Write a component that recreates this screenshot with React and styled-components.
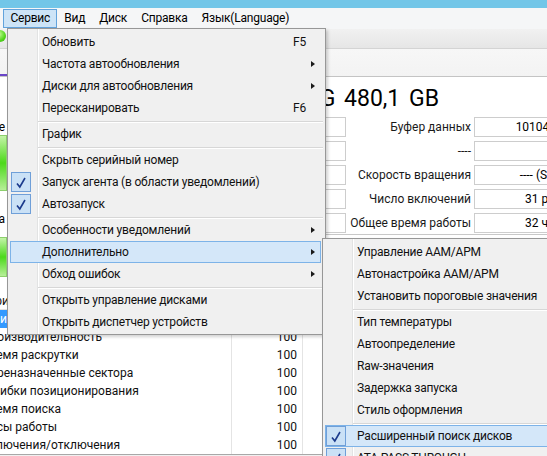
import React from 'react';
import styled, { createGlobalStyle } from 'styled-components';

const GlobalStyle = createGlobalStyle`
  html, body {
    margin: 0;
    padding: 0;
    background: #f0f0f0;
  }
  body {
    font-family: Roboto, "Liberation Sans", sans-serif;
    font-size: 12px;
    color: #000;
  }
`;

const Viewport = styled.div`
  width: 547px;
  height: 456px;
  overflow: hidden;
  background: #f0f0f0;
`;

/* the window is wider than the shot: its left part is cropped away */
const Frame = styled.div`
  position: relative;
  margin-left: -100px;
  width: 647px;
  height: 456px;
  display: flex;
  flex-direction: column;
  overflow: hidden;
`;

const TitleBar = styled.div`
  flex: none;
  height: 8px;
  background: #72c6e8;
`;

const MenuBar = styled.div`
  flex: none;
  height: 21px;
  box-sizing: border-box;
  display: flex;
  align-items: flex-start;
  padding: 1px 0 0 6px;
  background: #f5f6f7;
  letter-spacing: -0.2px;
`;

const MenuTop = styled.div`
  height: 19px;
  box-sizing: border-box;
  padding: 0 6px;
  line-height: 17px;
  white-space: nowrap;
  border: 1px solid ${p => (p.$open ? '#62a3dc' : 'transparent')};
  background: ${p => (p.$open ? '#cde4f7' : 'transparent')};
`;

const DiskBar = styled.div`
  flex: none;
  height: 20px;
  box-sizing: border-box;
  display: flex;
  align-items: flex-start;
  padding: 1px 0 0 94px;
  background: linear-gradient(#f1f1f1, #e6e6e6);
  border-bottom: 1px solid #d4d4d4;
`;

const DiskButton = styled.div`
  display: flex;
  align-items: center;
  gap: 4px;
  height: 12px;
  line-height: 12px;
  white-space: nowrap;
`;

const StatusDot = styled.span`
  width: 12px;
  height: 12px;
  border-radius: 50%;
  background: radial-gradient(circle at 40% 35%, #c8ff9a, #52d61c 60%, #36a80e);
`;

const TabRow = styled.div`
  flex: none;
  height: 28px;
  box-sizing: border-box;
  display: flex;
  align-items: flex-end;
  background: linear-gradient(#f7f7f7, #f3f3f3);
  border-bottom: 1px solid #c4c4c4;
`;

const DiskTab = styled.div`
  width: 107px;
  height: 2px;
  background: #6a46c8;
`;

const Body = styled.div`
  flex: none;
  height: 215px;
  display: flex;
  background: #fff;
`;

const StatusColumn = styled.div`
  flex: none;
  width: 107px;
  box-sizing: border-box;
  display: flex;
  flex-direction: column;
  padding-top: 42px;
`;

const StatusLabel = styled.div`
  height: 16px;
  line-height: 16px;
  text-align: right;
  padding-right: 2px;
  white-space: nowrap;
  margin-top: ${p => p.$gap || 0}px;
`;

const StatusBox = styled.div`
  height: ${p => p.$h}px;
  margin-top: ${p => p.$gap}px;
  box-sizing: border-box;
  border: 1px solid #8ccf6c;
  background: linear-gradient(#c4f4a8, #4cd91a 50%, #b6ef98);
  display: flex;
  align-items: center;
  justify-content: center;
  font-size: 14px;
  color: #000;
`;

const InfoPanel = styled.div`
  flex: 1;
  min-width: 0;
  overflow: hidden;
  display: flex;
  flex-direction: column;
  padding: 7px 0 0 4px;
`;

const ModelTitle = styled.div`
  height: 30px;
  font-size: 23px;
  line-height: 30px;
  word-spacing: 3px;
  text-align: right;
  padding-right: 108px;
  white-space: nowrap;
`;

const InfoGrid = styled.div`
  margin-top: 3px;
  display: grid;
  grid-template-columns: 92px 240px 122px 138px;
  grid-auto-rows: 20px;
  column-gap: 3px;
  row-gap: 4px;
`;

const FieldLabel = styled.div`
  line-height: 20px;
  text-align: right;
  white-space: nowrap;
  color: #1a1a1a;
`;

const FieldValue = styled.div`
  box-sizing: border-box;
  border: 1px solid #cdcdcd;
  background: #fff;
  line-height: 18px;
  text-align: center;
  white-space: nowrap;
  overflow: hidden;
`;

const Divider = styled.div`
  margin-top: 1px;
  height: 1px;
  background: #c8c8c8;
`;

const SmartTable = styled.div`
  flex: none;
  background: #fff;
  border-bottom: 1px solid #a8a8a8;
`;

const SmartRow = styled.div`
  display: grid;
  grid-template-columns: 76px 256px 71px 71px 71px 1fr;
  height: 18px;
  background: ${p => (p.$selected ? '#3399ff' : '#fff')};
  color: ${p => (p.$selected ? '#fff' : '#111')};
  border-bottom: ${p => (p.$head ? '1px solid #e2e2e2' : 'none')};
  box-sizing: border-box;
`;

const Cell = styled.div`
  border-right: 1px solid #e4e4e4;
  padding: ${p => (p.$right ? '0 5px 0 0' : '0 0 0 6px')};
  line-height: 18px;
  text-align: ${p => (p.$right ? 'right' : 'left')};
  white-space: nowrap;
  overflow: hidden;
`;

/* drop-down menus lie over the window */
const Dropdown = styled.div`
  position: absolute;
  top: ${p => p.$top}px;
  left: ${p => p.$left}px;
  width: ${p => p.$width}px;
  z-index: ${p => p.$z};
  box-sizing: border-box;
  padding: 2px 0 1px;
  border: 1px solid #979797;
  letter-spacing: -0.2px;
  background:
    linear-gradient(90deg, transparent 29px, #e2e3e3 29px, #e2e3e3 30px, #fff 30px, #fff 31px, transparent 31px),
    #f0f0f0;
  box-shadow: 2px 2px 3px rgba(0, 0, 0, 0.18);
`;

const Item = styled.div`
  height: 22px;
  margin: 0 4px 0 2px;
  box-sizing: border-box;
  display: grid;
  grid-template-columns: 31px 1fr auto 14px;
  align-items: center;
  white-space: nowrap;
  border: 1px solid ${p => (p.$active ? '#7db3e8' : 'transparent')};
  background: ${p => (p.$active ? '#d4e7f9' : 'transparent')};
  color: #111;
`;

const CheckBox = styled.span`
  width: 20px;
  height: 20px;
  box-sizing: border-box;
  border: 1px solid #6f9fd8;
  background: #cae1f6;
  display: flex;
`;

const Shortcut = styled.span`
  padding-left: 20px;
`;

const Arrow = styled.span`
  justify-self: center;
  width: 0;
  height: 0;
  border-left: 4px solid #1a1a1a;
  border-top: 3.5px solid transparent;
  border-bottom: 3.5px solid transparent;
`;

const Separator = styled.div`
  height: 1px;
  margin: 2px 2px 0 30px;
  background: #d7d7d7;
  border-bottom: 1px solid #fff;
`;

const CheckMark = () => (
  <svg width="18" height="18" viewBox="0 0 18 18">
    <path d="M5 10.5 L7.8 14 L13 5" fill="none" stroke="#1b3a8c" strokeWidth="1.6" />
  </svg>
);

const MenuEntry = ({ entry }) => {
  if (entry === '-') return <Separator />;
  return (
    <Item $active={entry.active}>
      <span>
        {entry.checked && (
          <CheckBox>
            <CheckMark />
          </CheckBox>
        )}
      </span>
      <span>{entry.label}</span>
      <Shortcut>{entry.key}</Shortcut>
      {entry.sub ? <Arrow /> : <span />}
    </Item>
  );
};

const topMenus = ['Файл', 'Правка', 'Сервис', 'Вид', 'Диск', 'Справка', 'Язык(Language)'];

const serviceMenu = [
  { label: 'Обновить', key: 'F5' },
  { label: 'Частота автообновления', sub: true },
  { label: 'Диски для автообновления', sub: true },
  { label: 'Пересканировать', key: 'F6' },
  '-',
  { label: 'График' },
  '-',
  { label: 'Скрыть серийный номер' },
  { label: 'Запуск агента (в области уведомлений)', checked: true },
  { label: 'Автозапуск', checked: true },
  '-',
  { label: 'Особенности уведомлений', sub: true },
  { label: 'Дополнительно', sub: true, active: true },
  { label: 'Обход ошибок', sub: true },
  '-',
  { label: 'Открыть управление дисками' },
  { label: 'Открыть диспетчер устройств' },
];

const extraMenu = [
  { label: 'Управление AAM/APM' },
  { label: 'Автонастройка AAM/APM' },
  { label: 'Установить пороговые значения' },
  '-',
  { label: 'Тип температуры', sub: true },
  { label: 'Автоопределение', sub: true },
  { label: 'Raw-значения', sub: true },
  { label: 'Задержка запуска' },
  { label: 'Стиль оформления', sub: true },
  '-',
  { label: 'Расширенный поиск дисков', checked: true, active: true },
  { label: 'ATA PASS THROUGH', checked: true },
];

const fields = [
  ['Прошивка', 'X41200RL', 'Буфер данных', '10104 МБ'],
  ['Серийный номер', '********', '----', ''],
  ['Интерфейс', 'Serial ATA', 'Скорость вращения', '---- (SSD)'],
  ['Режим передачи', 'SATA/600 | SATA/600', 'Число включений', '31 раз'],
  ['Буквы тома', 'C:', 'Общее время работы', '32 час'],
];

const attributes = [
  ['01', 'Ошибки чтения'],
  ['02', 'Производительность'],
  ['03', 'Время раскрутки'],
  ['05', 'Переназначенные сектора'],
  ['07', 'Ошибки позиционирования'],
  ['08', 'Время поиска'],
  ['09', 'Часы работы'],
  ['0C', 'Включения/отключения'],
];

export default function App() {
  return (
    <Viewport>
      <GlobalStyle />
      <Frame>
        <TitleBar />
        <MenuBar>
          {topMenus.map(m => (
            <MenuTop key={m} $open={m === 'Сервис'}>
              {m}
            </MenuTop>
          ))}
        </MenuBar>
        <DiskBar>
          <DiskButton>
            <StatusDot />
            Хорошо 35 °C C:
          </DiskButton>
        </DiskBar>
        <TabRow>
          <DiskTab />
        </TabRow>
        <Body>
          <StatusColumn>
            <StatusLabel>Техсостояние</StatusLabel>
            <StatusBox $h={56} $gap={0}>Хорошо</StatusBox>
            <StatusLabel $gap={20}>Температура</StatusLabel>
            <StatusBox $h={40} $gap={10}>35 °C</StatusBox>
          </StatusColumn>
          <InfoPanel>
            <ModelTitle>SanDisk SDSSDHII480G 480,1 GB</ModelTitle>
            <InfoGrid>
              {fields.map(([l1, v1, l2, v2]) => (
                <React.Fragment key={l2 + l1}>
                  <FieldLabel>{l1}</FieldLabel>
                  <FieldValue>{v1}</FieldValue>
                  <FieldLabel>{l2}</FieldLabel>
                  <FieldValue>{v2}</FieldValue>
                </React.Fragment>
              ))}
            </InfoGrid>
            <Divider />
          </InfoPanel>
        </Body>
        <SmartTable>
          <SmartRow $head>
            <Cell>ID</Cell>
            <Cell>Атрибут</Cell>
            <Cell $right>Текущее</Cell>
            <Cell $right>Наихудшее</Cell>
            <Cell $right>Порог</Cell>
            <Cell>Raw-значения</Cell>
          </SmartRow>
          {attributes.map(([id, name], i) => (
            <SmartRow key={id} $selected={i === 0}>
              <Cell>{id}</Cell>
              <Cell>{name}</Cell>
              <Cell $right>100</Cell>
              <Cell $right>100</Cell>
              <Cell $right>0</Cell>
              <Cell>000000000000</Cell>
            </SmartRow>
          ))}
        </SmartTable>

        <Dropdown $top={28} $left={107} $width={319} $z={2}>
          {serviceMenu.map((e, i) => (
            <MenuEntry key={i} entry={e} />
          ))}
        </Dropdown>
        <Dropdown $top={238} $left={422} $width={270} $z={3}>
          {extraMenu.map((e, i) => (
            <MenuEntry key={i} entry={e} />
          ))}
        </Dropdown>
      </Frame>
    </Viewport>
  );
}
